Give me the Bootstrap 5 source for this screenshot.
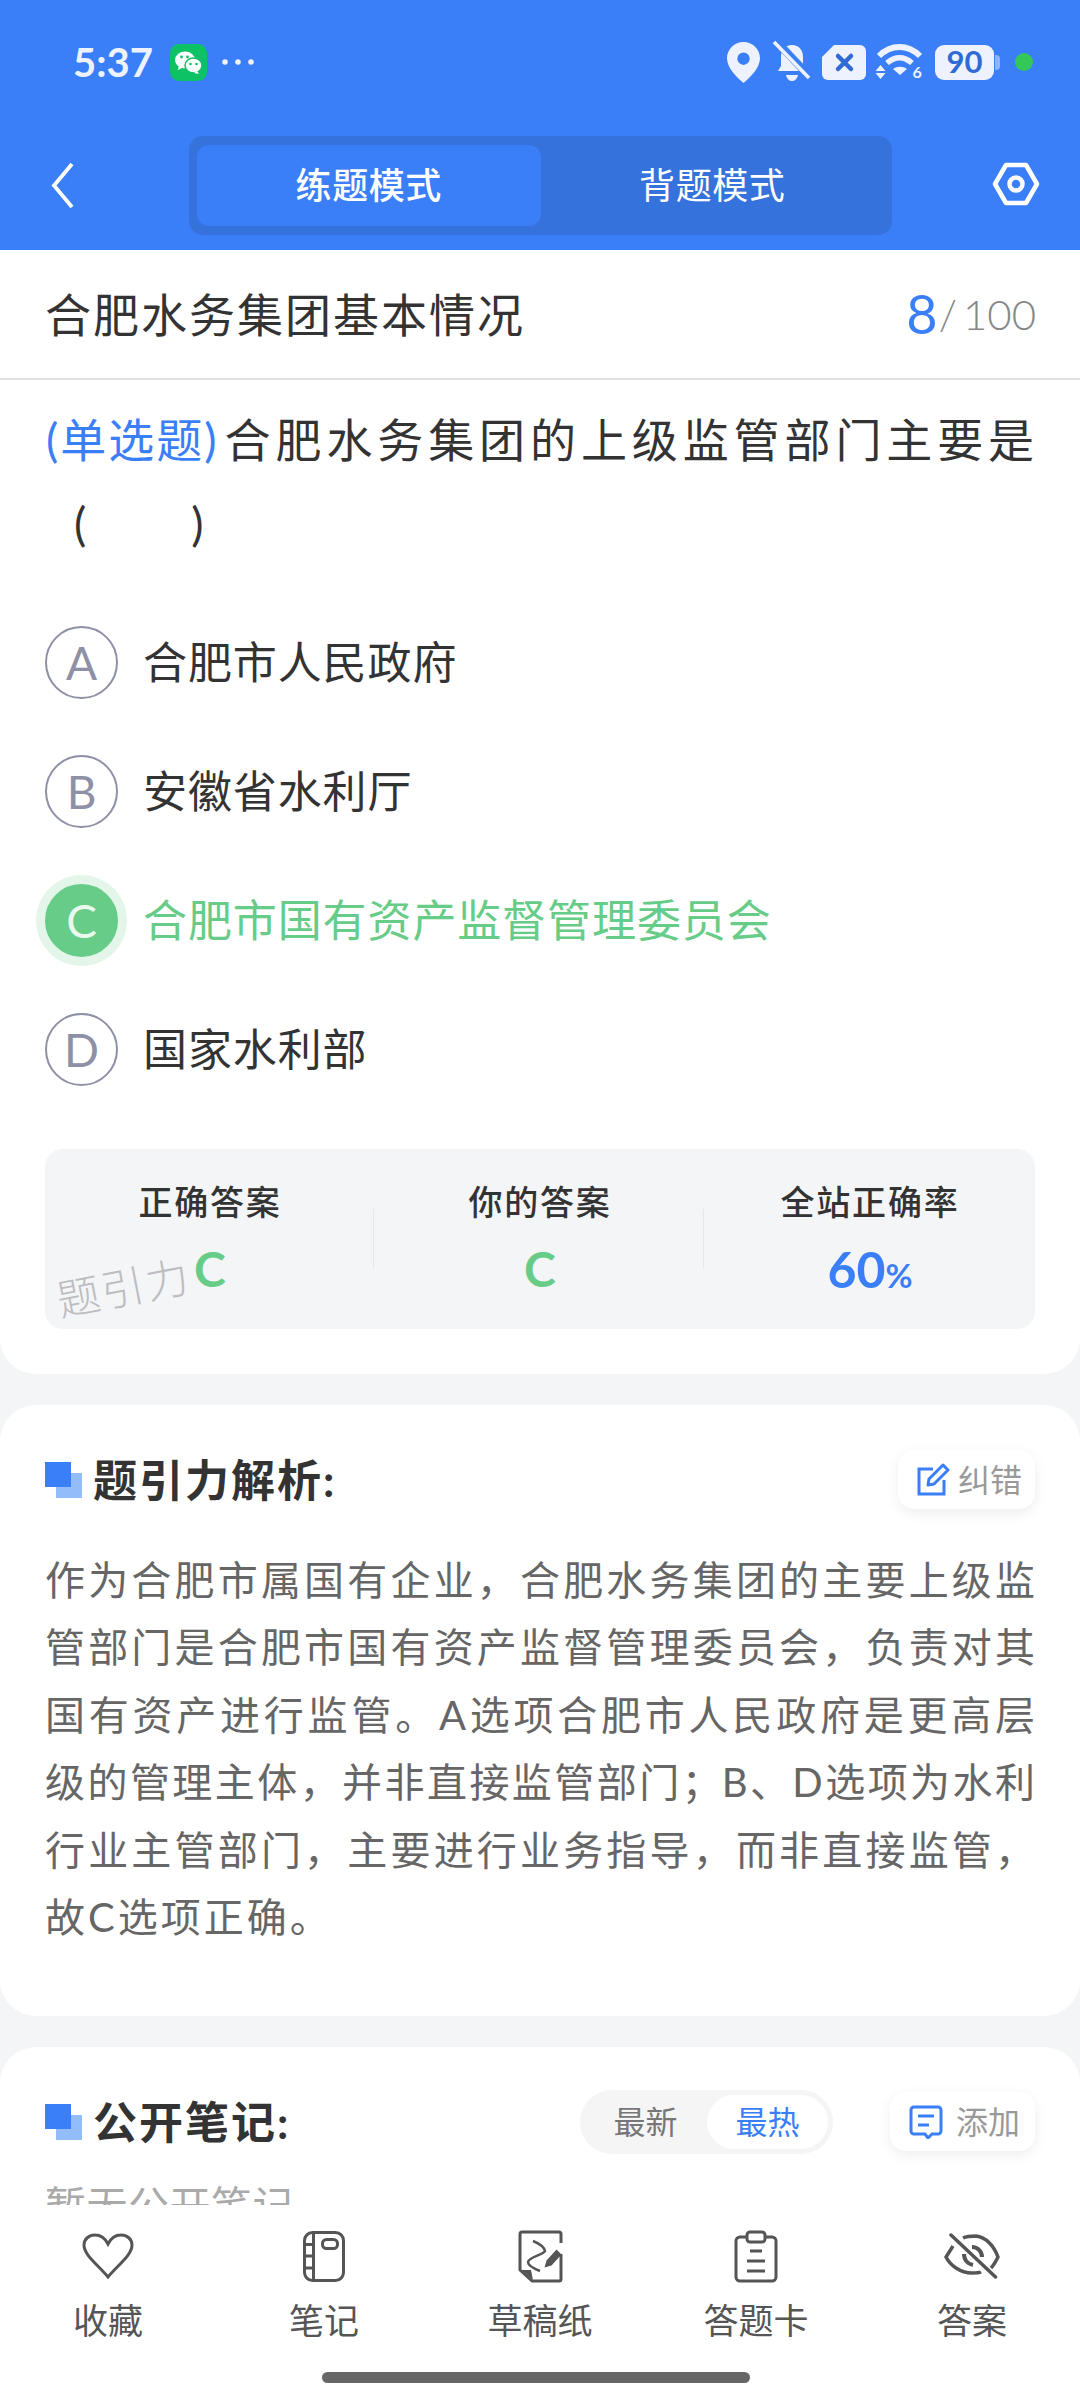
<!DOCTYPE html>
<html lang="zh-CN">
<head>
<meta charset="UTF-8" />
<meta name="viewport" content="width=device-width, initial-scale=1" />
<title>练题模式</title>
<link href="https://cdn.jsdelivr.net/npm/bootstrap@5.3.0/dist/css/bootstrap.min.css" rel="stylesheet" />
<style>
body { background: #f4f5f7; font-family: Lato, "Noto Sans CJK SC", sans-serif; color: #333; }
.screen { width: 1080px; height: 2400px; overflow: hidden; }
.top-bar { background: #3b7ff8; height: 250px; flex: none; color: #fff; }
.status-row { height: 124px; padding: 0 47px 0 73px; color: #edf2fe; }
.status-row svg { overflow: visible; }
.status-time { font-size: 40px; font-weight: 700; line-height: 1; width: 97px; }
.wx-icon { width: 37px; height: 37px; flex: none; }
.more-dots { margin-left: 15px; width: 32px; }
.green-dot { width: 18px; height: 18px; border-radius: 50%; background: #34c759; margin-left: 15px; }
.gap-13 { margin-left: 13px; }
.gap-11 { margin-left: 11px; }
.gap-10 { margin-left: 10px; }
.gap-12 { margin-left: 12px; }
.nav-row { height: 126px; padding: 12px 40px 0 51px; }
.back-icon { margin: 26px 115px 0 0; }
.gear-icon { margin: 26px 0 0 auto; }
.mode-switch { width: 703px; height: 99px; background: #3672dc; border-radius: 14px; padding: 9px 8px; }
.mode-item { width: 344px; height: 81px; border-radius: 12px; font-size: 36px; line-height: 81px; text-align: center; color: #fff; letter-spacing: 0.6px; }
.mode-on { background: #3b7ff8; font-weight: 500; }
.scroll-area { flex: 1 1 auto; min-height: 0; overflow: hidden; }
.panel-one { background: #fff; border-radius: 0 0 36px 36px; padding-bottom: 45px; }
.title-row { height: 130px; padding: 0 44px 0 46px; border-bottom: 2px solid #dedfe2; }
.title-text { font-size: 46px; letter-spacing: 2px; margin-left: -1px; color: #333; }
.page-cur { font-size: 54px; color: #3b7ff8; line-height: 1; }
.page-all { font-size: 42px; font-weight: 300; color: #888; margin-left: 1px; }
.page-all b { font-weight: 300; margin-left: 6px; }
.question { padding: 18px 40px 0 46px; font-size: 46px; line-height: 84px; letter-spacing: 4.9px; }
.q-type { color: #3b7ff8; letter-spacing: 2px; margin-right: 6px; }
.q-blank { padding-left: 28px; white-space: pre; }
.option-list { margin: 60px 0 63px; padding-left: 45px; gap: 56px; }
.opt-row { height: 73px; }
.opt-ball { width: 73px; height: 73px; border: 2px solid #8e90a6; border-radius: 50%; color: #8e90a6; font-size: 46px; line-height: 1; flex: none; }
.opt-text { margin-left: 25px; font-size: 44px; letter-spacing: 0.9px; color: #333; position: relative; top: -1px; }
.opt-good .opt-ball { background: #66cc88; border-color: #66cc88; color: #e9f9ee; box-shadow: 0 0 0 9px #e4f6ea; }
.opt-good .opt-text { color: #66cc88; }
.stat-box { margin: 0 45px; height: 180px; background: #f4f5f7; border-radius: 18px; overflow: hidden; position: relative; }
.stat-col { width: 330px; padding-top: 31px; text-align: center; }
.stat-label { font-size: 34px; line-height: 44px; font-weight: 500; letter-spacing: 1.8px; color: #333; }
.stat-value { font-size: 48px; line-height: 48px; margin-top: 21px; font-weight: 700; color: #66cc88; }
.stat-blue { color: #3b7ff8; font-size: 50px; }
.stat-blue small { font-size: 33px; }
.stat-sep { position: absolute; top: 60px; width: 1px; height: 60px; background: #e6e7ea; }
.sep-one { left: 328px; }
.sep-two { left: 658px; }
.mark-text { position: absolute; left: 11px; top: 117px; font-size: 43px; line-height: 1; color: #bcbdc0; transform: rotate(-11deg); letter-spacing: 2px; font-weight: 300; }
.panel { background: #fff; border-radius: 36px; margin-top: 31px; padding: 45px 45px 65px; }
.panel-head { height: 59px; }
.sq-icon { width: 37px; height: 36px; position: relative; flex: none; }
.sq-icon i { position: absolute; display: block; width: 26px; height: 25px; }
.sq-a { right: 0; bottom: 0; background: #93bcfb; }
.sq-b { left: 0; top: 0; background: #3b7ff8; }
.head-text { margin-left: 11px; font-size: 44px; font-weight: 700; letter-spacing: 2px; color: #333; }
.mini-btn { height: 59px; border-radius: 16px; background: #fff; box-shadow: 0 4px 14px rgba(0,0,0,.07); font-size: 32px; color: #999; padding: 0 0 0 19px; }
.mini-btn span { margin-left: 8px; }
.mini-fix { width: 137px; }
.mini-add { width: 145px; }
.mini-add span { margin-left: 13px; }
.jiexi { margin: 38px 0 0; font-size: 40px; line-height: 67.4px; color: #666; text-align: justify; text-align-last: justify; width: 990px; }
.jiexi-end { display: block; text-align-last: left; letter-spacing: 3px; }
.sort-pill { width: 253px; height: 64px; border-radius: 32px; background: #f5f5f5; padding: 5px; margin-right: 57px; font-size: 32px; color: #777; }
.sort-pill div { width: 121px; height: 54px; line-height: 54px; text-align: center; border-radius: 27px; }
.sort-on { background: #fff; color: #3b7ff8; margin-left: auto; }
.no-note { margin-top: 25px; font-size: 41px; letter-spacing: .5px; line-height: 60px; color: #aaa; }
.bottom-bar { height: 195px; flex: none; background: #fff; padding-top: 24px; position: relative; }
.tool-item { width: 216px; text-align: center; color: #555; }
.tool-icon { height: 54px; }
.tool-label { font-size: 35px; line-height: 44px; margin-top: 15px; color: #555; }
.home-bar { position: absolute; left: 322px; top: 167px; width: 428px; height: 11px; border-radius: 6px; background: #666; }
</style>
</head>
<body>
<div class="screen d-flex flex-column">

    <div class="top-bar">
        <div class="status-row d-flex align-items-center">
            <div class="status-time">5:37</div>
            <svg class="wx-icon" viewBox="0 0 37 37"><rect width="37" height="37" rx="9" fill="#0cc265"/><ellipse cx="15" cy="16" rx="10" ry="8.500" fill="#fff"/><path d="M9 21l-1 5 6-3z" fill="#fff"/><ellipse cx="23.500" cy="21.500" rx="8.500" ry="7.500" fill="#fff" stroke="#0cc265" stroke-width="1.500"/><path d="M27 27l2 3-5-1z" fill="#fff"/><circle cx="11.500" cy="13" r="1.400" fill="#0cc265"/><circle cx="17.500" cy="13" r="1.400" fill="#0cc265"/><circle cx="20.500" cy="20" r="1.300" fill="#0cc265"/><circle cx="26.500" cy="20" r="1.300" fill="#0cc265"/></svg>
            <svg class="more-dots" height="6" viewBox="0 0 32 6"><circle cx="3" cy="3" r="2.800" fill="#edf2fe"/><circle cx="16" cy="3" r="2.800" fill="#edf2fe"/><circle cx="29" cy="3" r="2.800" fill="#edf2fe"/></svg>
            <div class="ms-auto d-flex align-items-center">
                <svg width="33" height="41" viewBox="0 0 33 41"><path fill-rule="evenodd" d="M16.500 0C7.400 0 0 7.300 0 16.300 0 26 10 35.500 16.500 41 23 35.500 33 26 33 16.300 33 7.300 25.600 0 16.500 0zm0 10.500a6.200 6.200 0 1 1 0 12.400 6.200 6.200 0 0 1 0-12.400z" fill="#edf2fe"/></svg>
                <svg class="gap-13" width="38" height="41" viewBox="0 0 38 41"><path d="M19 3c7 0 11 5 11 12v9l3 5H5l3-5v-9C8 8 12 3 19 3z" fill="#edf2fe"/><path d="M13 33h12c-1 4-3 6-6 6s-5-2-6-6z" fill="#edf2fe"/><path d="M4 0l34 36" stroke="#3b7ff8" stroke-width="8"/><path d="M1 0l35 36" stroke="#edf2fe" stroke-width="3.600"/></svg>
                <svg class="gap-11" width="44" height="35" viewBox="0 0 44 35"><path d="M12 0h26a6 6 0 0 1 6 6v23a6 6 0 0 1-6 6H6a6 6 0 0 1-6-6V12z" fill="#edf2fe"/><path d="M16 11l13 13M29 11L16 24" stroke="#2f6ad6" stroke-width="4.500" stroke-linecap="round"/></svg>
                <svg class="gap-10" width="47" height="36" viewBox="0 0 47 36"><path d="M3 12C15 0 32 0 44 12" fill="none" stroke="#edf2fe" stroke-width="6"/><path d="M11 19c8-7 17-7 25 0" fill="none" stroke="#edf2fe" stroke-width="5.500"/><path d="M17 25c4-3 10-3 14 0l-7 6z" fill="#edf2fe"/><path d="M4.500 21l5 6h-10zM4.500 35l5-6h-10z" fill="#edf2fe"/><text x="36.500" y="34" font-size="16" font-weight="700" fill="#edf2fe" font-family="Lato">6</text></svg>
                <svg class="gap-12" width="65" height="35" viewBox="0 0 65 35"><rect width="59" height="35" rx="9" fill="#edf2fe"/><path d="M60 10h1a4 4 0 0 1 4 4v7a4 4 0 0 1-4 4h-1z" fill="#8fb4fa"/><text x="29.500" y="28" font-size="31" font-weight="700" text-anchor="middle" fill="#2f6ad6" font-family="Lato">90</text></svg>
                <div class="green-dot"></div>
            </div>
        </div>
        <div class="nav-row d-flex align-items-start">
            <svg class="back-icon" width="23" height="47" viewBox="0 0 23 47"><path d="M21 2L3 23.500 21 45" fill="none" stroke="#fff" stroke-width="3.800"/></svg>
            <div class="mode-switch d-flex">
                <div class="mode-item mode-on">练题模式</div>
                <div class="mode-item">背题模式</div>
            </div>
            <svg class="gear-icon" width="48" height="44" viewBox="0 0 48 44"><path d="M14 3h20l11 19-11 19H14L3 22z" fill="none" stroke="#fff" stroke-width="4.500" stroke-linejoin="round"/><circle cx="24" cy="22" r="6.500" fill="none" stroke="#fff" stroke-width="4.500"/></svg>
        </div>
    </div>

    <div class="scroll-area">
        <div class="panel-one">
            <div class="title-row d-flex align-items-center justify-content-between">
                <div class="title-text">合肥水务集团基本情况</div>
                <div class="d-flex align-items-center"><span class="page-cur">8</span><span class="page-all">/<b>100</b></span></div>
            </div>
            <div class="question">
                <span class="q-type">(单选题)</span>合肥水务集团的上级监管部门主要是<br>
                <span class="q-blank">(      )</span>
            </div>
            <div class="option-list d-flex flex-column">
                <div class="opt-row d-flex align-items-center">
                    <div class="opt-ball d-flex align-items-center justify-content-center">A</div>
                    <div class="opt-text">合肥市人民政府</div>
                </div>
                <div class="opt-row d-flex align-items-center">
                    <div class="opt-ball d-flex align-items-center justify-content-center">B</div>
                    <div class="opt-text">安徽省水利厅</div>
                </div>
                <div class="opt-row opt-good d-flex align-items-center">
                    <div class="opt-ball d-flex align-items-center justify-content-center">C</div>
                    <div class="opt-text">合肥市国有资产监督管理委员会</div>
                </div>
                <div class="opt-row d-flex align-items-center">
                    <div class="opt-ball d-flex align-items-center justify-content-center">D</div>
                    <div class="opt-text">国家水利部</div>
                </div>
            </div>
            <div class="stat-box d-flex">
                <div class="stat-col">
                    <div class="stat-label">正确答案</div>
                    <div class="stat-value">C</div>
                </div>
                <div class="stat-col">
                    <div class="stat-label">你的答案</div>
                    <div class="stat-value">C</div>
                </div>
                <div class="stat-col">
                    <div class="stat-label">全站正确率</div>
                    <div class="stat-value stat-blue">60<small>%</small></div>
                </div>
                <div class="stat-sep sep-one"></div>
                <div class="stat-sep sep-two"></div>
                <div class="mark-text">题引力</div>
            </div>
        </div>

        <div class="panel">
            <div class="panel-head d-flex align-items-center">
                <div class="sq-icon"><i class="sq-a"></i><i class="sq-b"></i></div>
                <div class="head-text">题引力解析:</div>
                <div class="mini-btn mini-fix ms-auto d-flex align-items-center">
                    <svg width="33" height="33" viewBox="0 0 33 33"><path d="M16 6H2v25h25V17" fill="none" stroke="#3b7ff8" stroke-width="3"/><path d="M26 2l5 5-14 14-6 1 1-6z" fill="none" stroke="#3b7ff8" stroke-width="3" stroke-linejoin="round"/></svg>
                    <span>纠错</span>
                </div>
            </div>
            <p class="jiexi">作为合肥市属国有企业，合肥水务集团的主要上级监<br>管部门是合肥市国有资产监督管理委员会，负责对其<br>国有资产进行监管。A选项合肥市人民政府是更高层<br>级的管理主体，并非直接监管部门；B、D选项为水利<br>行业主管部门，主要进行业务指导，而非直接监管，<br><span class="jiexi-end">故C选项正确。</span></p>
        </div>

        <div class="panel">
            <div class="panel-head d-flex align-items-center">
                <div class="sq-icon"><i class="sq-a"></i><i class="sq-b"></i></div>
                <div class="head-text">公开笔记:</div>
                <div class="sort-pill d-flex ms-auto">
                    <div>最新</div>
                    <div class="sort-on">最热</div>
                </div>
                <div class="mini-btn mini-add d-flex align-items-center">
                    <svg width="34" height="34" viewBox="0 0 34 34"><path d="M5 2h24a3 3 0 0 1 3 3v21a3 3 0 0 1-3 3h-6l-4 4-3-4H5a3 3 0 0 1-3-3V5a3 3 0 0 1 3-3z" fill="none" stroke="#3b7ff8" stroke-width="3"/><path d="M9 11h16M9 20h11" stroke="#3b7ff8" stroke-width="3"/></svg>
                    <span>添加</span>
                </div>
            </div>
            <div class="no-note">暂无公开笔记</div>
        </div>
    </div>

    <div class="bottom-bar d-flex">
        <div class="tool-item">
            <div class="tool-icon d-flex align-items-center justify-content-center">
                <svg width="52" height="46" viewBox="0 0 52 46"><path d="M26 44C15 31 2 22 2 12 2 6 7 2 13 2c6 0 10 3 13 9 3-6 7-9 13-9 6 0 11 4 11 10 0 10-13 19-24 32z" fill="none" stroke="#555" stroke-width="3"/></svg>
            </div>
            <div class="tool-label">收藏</div>
        </div>
        <div class="tool-item">
            <div class="tool-icon d-flex align-items-center justify-content-center">
                <svg width="44" height="53" viewBox="0 0 44 53"><rect x="2.500" y="2.500" width="39" height="48" rx="8" fill="none" stroke="#555" stroke-width="3"/><path d="M11.500 2.500v48M2.500 14.500h9M2.500 26h9M2.500 38h9" stroke="#555" stroke-width="3" fill="none"/><rect x="20.500" y="9.500" width="15" height="9" rx="4" fill="none" stroke="#555" stroke-width="3"/></svg>
            </div>
            <div class="tool-label">笔记</div>
        </div>
        <div class="tool-item">
            <div class="tool-icon d-flex align-items-center justify-content-center">
                <svg width="45" height="53" viewBox="0 0 45 53"><path d="M43 13V4a2 2 0 0 0-2-2H4a2 2 0 0 0-2 2v36l12 11h27a2 2 0 0 0 2-2V24" fill="none" stroke="#555" stroke-width="3" stroke-linejoin="round"/><path d="M3 40h10l2 10z" fill="#555"/><path d="M15 11c5 2 11 6 12 10-2 4-16 6-17 11 0 4 7 7 12 9" fill="none" stroke="#555" stroke-width="2.500"/><path d="M26.500 37.500l2-7 10-11 5 5-10 11z" fill="#555"/></svg>
            </div>
            <div class="tool-label">草稿纸</div>
        </div>
        <div class="tool-item">
            <div class="tool-icon d-flex align-items-center justify-content-center">
                <svg width="44" height="53" viewBox="0 0 44 53"><path d="M12 7H6a4 4 0 0 0-4 4v36a4 4 0 0 0 4 4h32a4 4 0 0 0 4-4V11a4 4 0 0 0-4-4h-6" fill="none" stroke="#555" stroke-width="3"/><rect x="13" y="2" width="18" height="10" rx="3" fill="none" stroke="#555" stroke-width="3"/><path d="M16 21h12M13 31h18M13 41h18" stroke="#555" stroke-width="3"/></svg>
            </div>
            <div class="tool-label">答题卡</div>
        </div>
        <div class="tool-item">
            <div class="tool-icon d-flex align-items-center justify-content-center">
                <svg width="57" height="46" viewBox="0 0 57 46"><path d="M9 13L2 24c4 8 14 16 26 16 4 0 7 0 9-1" fill="none" stroke="#555" stroke-width="3.500"/><path d="M19 5c4-2 9-2 13-2 10 1 18 10 22 21-2 4-4 8-7 11" fill="none" stroke="#555" stroke-width="3.500"/><path d="M20 21c0 6 4 10 9 11M28 14c6 0 10 5 10 10" fill="none" stroke="#555" stroke-width="4"/><path d="M7 2l44.500 42" stroke="#555" stroke-width="3.500" stroke-linecap="round"/></svg>
            </div>
            <div class="tool-label">答案</div>
        </div>
        <div class="home-bar"></div>
    </div>
</div>
<script src="https://cdn.jsdelivr.net/npm/bootstrap@5.3.0/dist/js/bootstrap.bundle.min.js"></script>
</body>
</html>
